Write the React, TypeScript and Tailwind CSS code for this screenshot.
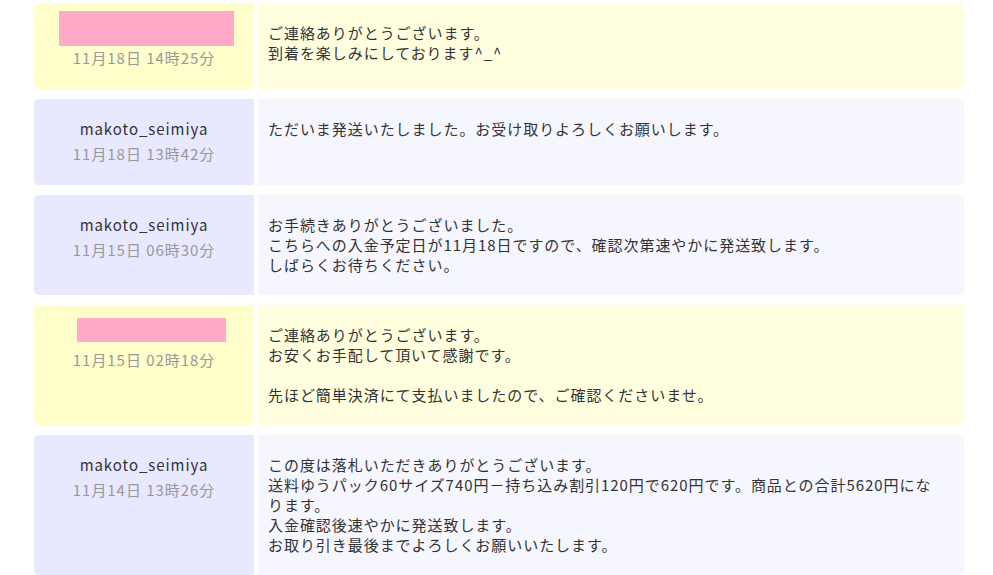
const font = "font-['Noto_Sans_CJK_JP','Noto_Sans',sans-serif]";

type Msg = {
  name: string | null;
  redact?: string;
  date: string;
  mine: boolean;
  lines: string[];
};

const messages: Msg[] = [
  {
    name: null,
    redact: 'left-[25px] -top-[12px] w-[175px] h-[35px]',
    date: '11月18日 14時25分',
    mine: true,
    lines: ['ご連絡ありがとうございます。', '到着を楽しみにしております^_^'],
  },
  {
    name: 'makoto_seimiya',
    date: '11月18日 13時42分',
    mine: false,
    lines: ['ただいま発送いたしました。お受け取りよろしくお願いします。'],
  },
  {
    name: 'makoto_seimiya',
    date: '11月15日 06時30分',
    mine: false,
    lines: [
      'お手続きありがとうございました。',
      'こちらへの入金予定日が11月18日ですので、確認次第速やかに発送致します。',
      'しばらくお待ちください。',
    ],
  },
  {
    name: null,
    redact: 'left-[43px] -top-[7px] w-[149px] h-[24px]',
    date: '11月15日 02時18分',
    mine: true,
    lines: ['ご連絡ありがとうございます。', 'お安くお手配して頂いて感謝です。', '', '先ほど簡単決済にて支払いましたので、ご確認くださいませ。'],
  },
  {
    name: 'makoto_seimiya',
    date: '11月14日 13時26分',
    mine: false,
    lines: [
      'この度は落札いただきありがとうございます。',
      '送料ゆうパック60サイズ740円－持ち込み割引120円で620円です。商品との合計5620円にな',
      'ります。',
      '入金確認後速やかに発送致します。',
      'お取り引き最後までよろしくお願いいたします。',
    ],
  },
];

function Row({ m }: { m: Msg }) {
  return (
    <div className="flex gap-1 rounded-[5px] overflow-hidden">
      <div
        className={`w-[220px] shrink-0 flex flex-col items-center pt-5 pb-[21px] ${
          m.mine ? 'bg-[#ffffcc]' : 'bg-[#e8e8ff]'
        }`}
      >
        <div className="relative h-5 w-full text-center leading-5 text-[#333]">
          {m.name ?? ''}
          {m.redact && <div className={`absolute bg-[#ffabc8] ${m.redact}`} />}
        </div>
        <div className="mt-[5px] h-5 leading-5 text-[#999]">{m.date}</div>
      </div>
      <div
        className={`flex-1 px-[10px] py-5 leading-5 text-[#333] whitespace-nowrap ${
          m.mine ? 'bg-[#ffffe0]' : 'bg-[#f6f6ff]'
        }`}
      >
        {m.lines.map((l, i) => (
          <div key={i} className="h-5">
            {l}
          </div>
        ))}
      </div>
    </div>
  );
}

export default function App() {
  return (
    <div className={`w-[993px] h-[575px] overflow-hidden bg-white ${font} text-[15px] tracking-[0.95px]`}>
      <div className="ml-[34px] w-[930px] pt-[3px] flex flex-col gap-[10px]">
        {messages.map((m, i) => (
          <Row key={i} m={m} />
        ))}
      </div>
    </div>
  );
}
